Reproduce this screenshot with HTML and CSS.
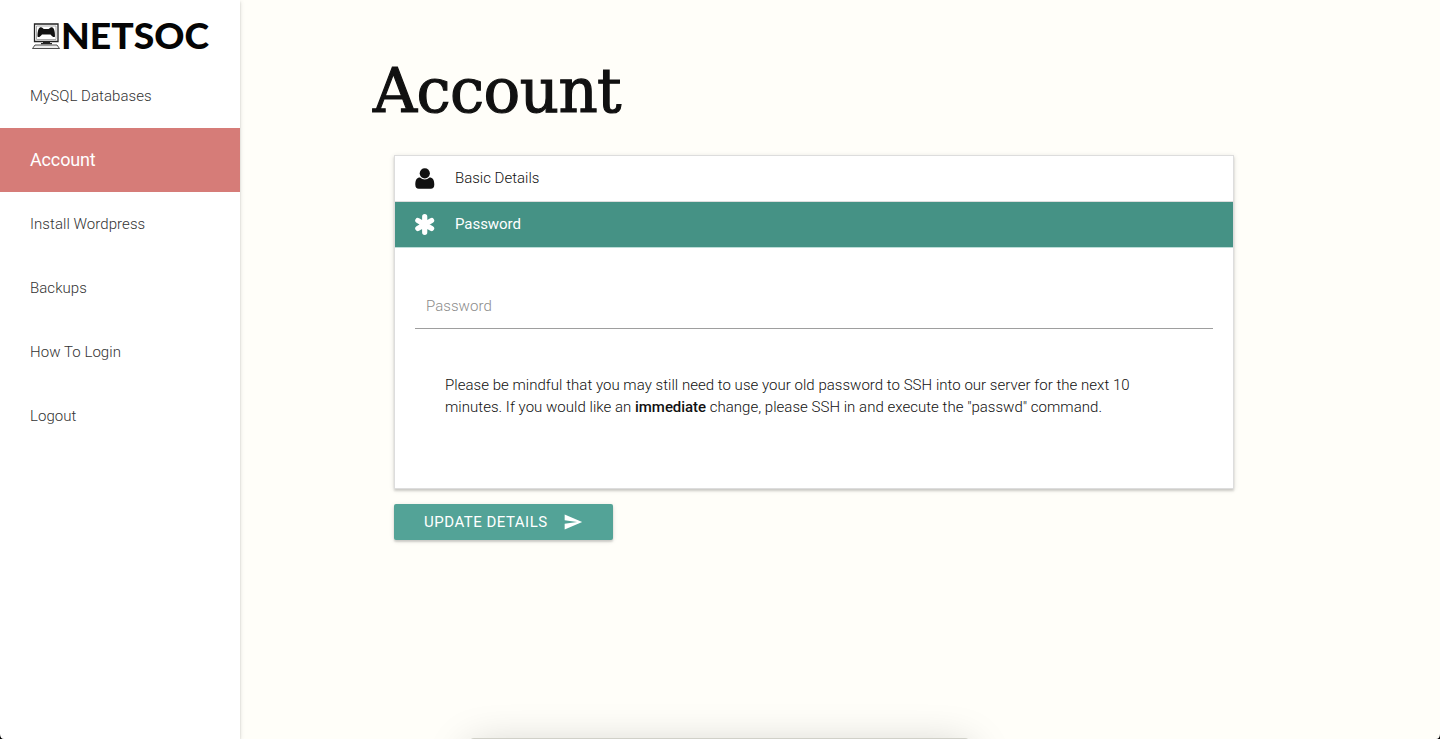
FILE: index.html
```html
<!DOCTYPE html>
<html lang="en">
<head>
<meta charset="utf-8">
<title>Netsoc Account</title>
<link rel="stylesheet" href="styles.css">
</head>
<body>
<div class="app">
  <nav class="sidebar">
    <a class="brand" href="#" aria-label="Netsoc">
      <svg class="logo" width="190" height="42" viewBox="0 0 190 42">
        <g fill="none" stroke="#222" stroke-width="1">
          <path d="M3.500 4H27V21.500H3.500Z" stroke-width="1.300"/>
          <path d="M5.500 6H25V19.500H5.500Z" stroke="#999" stroke-width=".8"/>
          <path d="M4 25H26L28.500 28.500H1.500Z" fill="#eee" stroke-width=".8"/>
        </g>
        <path d="M12 21.500H19V23H21V24.300H10V23H12Z" fill="#222"/>
        <path d="M9 7.500C7 8.500 6.500 12.500 6.500 16.500C7.500 18 9.500 16.500 11 14.500H19.500C21 16.500 23 18 24 16.500C24 12.500 23.500 8.500 21.500 7.500C19.500 6.500 18.500 9 17.500 9H13C12 9 11 6.500 9 7.500Z" fill="#111"/>
        <text class="logo-text" x="30" y="29" textLength="148" lengthAdjust="spacingAndGlyphs">NETSOC</text>
      </svg>
    </a>
    <a class="item" href="#">MySQL Databases</a>
    <a class="item active" href="#">Account</a>
    <a class="item" href="#">Install Wordpress</a>
    <a class="item" href="#">Backups</a>
    <a class="item" href="#">How To Login</a>
    <a class="item" href="#">Logout</a>
  </nav>
  <main class="content">
    <h1 class="title">Account</h1>
    <section class="panel">
      <div class="row">
        <svg class="icon" width="20" height="22" viewBox="0 0 20 22"><path d="M0.300 16.500C0.300 12 1.800 9.500 5 9.500C7.800 12.100 11.800 12.100 14.500 9.500C17.800 9.500 19.300 12 19.300 16.500C19.300 19.500 18 20.800 15.800 20.800H3.800C1.600 20.800 0.300 19.500 0.300 16.500Z" fill="#111"/><circle cx="9.800" cy="5.300" r="5.100" fill="#111"/></svg>
        <span>Basic Details</span>
      </div>
      <div class="row open">
        <svg class="icon" width="20" height="22" viewBox="0 0 20 22"><path d="M9.700 2.700V18.300M2.800 6.500L16.600 14.500M16.600 6.500L2.800 14.500" fill="none" stroke="#fff" stroke-width="5.200" stroke-linecap="round"/></svg>
        <span>Password</span>
      </div>
      <div class="body">
        <div class="field">Password</div>
        <p class="note">Please be mindful that you may still need to use your old password to SSH into our server for the next 10<br>minutes. If you would like an <b>immediate</b> change, please SSH in and execute the "passwd" command.</p>
      </div>
    </section>
    <button class="submit">
      <span>UPDATE DETAILS</span>
      <svg width="20" height="20" viewBox="0 0 24 24"><path d="M2 21L23 12L2 3V10L17 12L2 14Z" fill="#fff"/></svg>
    </button>
  </main>
  <div class="dock"></div>
  <svg class="corner left" width="4" height="5" viewBox="0 0 4 5"><path d="M0 0C0 3 1.500 5 4 5H0Z"/></svg>
  <svg class="corner right" width="4" height="5" viewBox="0 0 4 5"><path d="M4 0C4 3 2.500 5 0 5H4Z"/></svg>
</div>
</body>
</html>
```
FILE: styles.css
```css
* { box-sizing: border-box; }
body { margin: 0; font: 300 15px/22px Roboto, sans-serif; color: #111; }
.app { position: relative; display: flex; width: 1440px; height: 739px; overflow: hidden; background: #fffef9; }
.sidebar {
  display: flex; flex-direction: column; flex: none; width: 240px; background: #fff;
  box-shadow: 0 2px 2px rgba(0,0,0,.14), 0 1px 5px rgba(0,0,0,.12), 0 3px 1px -2px rgba(0,0,0,.2);
}
.brand { display: block; height: 64px; padding: 20px 0 0 31px; }
.logo { display: block; overflow: visible; }
.logo-text { font: 900 36px Lato, sans-serif; fill: #050505; }
.item { height: 64px; padding-left: 30px; line-height: 64px; letter-spacing: .06px; color: #333; text-decoration: none; }
.item.active { background: #d67c78; color: #fff; font-size: 18px; font-weight: 400; letter-spacing: -.15px; }
.content { padding: 50px 0 0 132px; }
.title {
  margin: 0; height: 105px; padding: 0 0 0 1px; font: 400 61px/81px "Roboto Slab", "DejaVu Serif", serif;
  letter-spacing: -.6px; color: #111; -webkit-text-stroke: 1.2px #111;
}
.panel {
  width: 840px; height: 334px; margin-left: 22px; border: 1px solid #ddd; background: #fff;
  box-shadow: 0 2px 2px rgba(0,0,0,.14), 0 1px 5px rgba(0,0,0,.12);
}
.row { display: flex; align-items: center; height: 46px; padding-left: 20px; border-bottom: 1px solid #ddd; }
.row span { padding-bottom: 2px; }
.icon { margin-right: 20px; flex: none; }
.open { background: #459285; color: #fff; font-weight: 400; border-bottom-color: #bdddd8; }
.open span { letter-spacing: -.05px; }
.body { padding: 36px 20px 0; }
.field { height: 45px; padding-left: 11px; border-bottom: 1px solid #9e9e9e; line-height: 45px; color: #8c8c8c; letter-spacing: .05px; }
.note { margin: 45px 0 0 30px; white-space: nowrap; letter-spacing: .03px; }
.note b { font-weight: 500; letter-spacing: -.05px; }
.submit {
  display: flex; align-items: center; width: 219px; height: 36px; margin: 15px 0 0 22px; padding: 0 0 0 30px;
  border: 0; border-radius: 2px; background: #53a397; color: #fff; font: 400 15px/36px Roboto, sans-serif; letter-spacing: .5px;
  box-shadow: 0 2px 2px rgba(0,0,0,.14), 0 1px 5px rgba(0,0,0,.12);
}
.submit svg { margin-left: 15px; }
.dock { position: absolute; left: 470px; bottom: -59px; width: 499px; height: 60px; border-radius: 4px; background: #d0d0c8; box-shadow: 0 10px 44px rgba(0,0,0,.22); }
.corner { position: absolute; bottom: 0; }
.left { left: 0; }
.right { right: 0; }
```
